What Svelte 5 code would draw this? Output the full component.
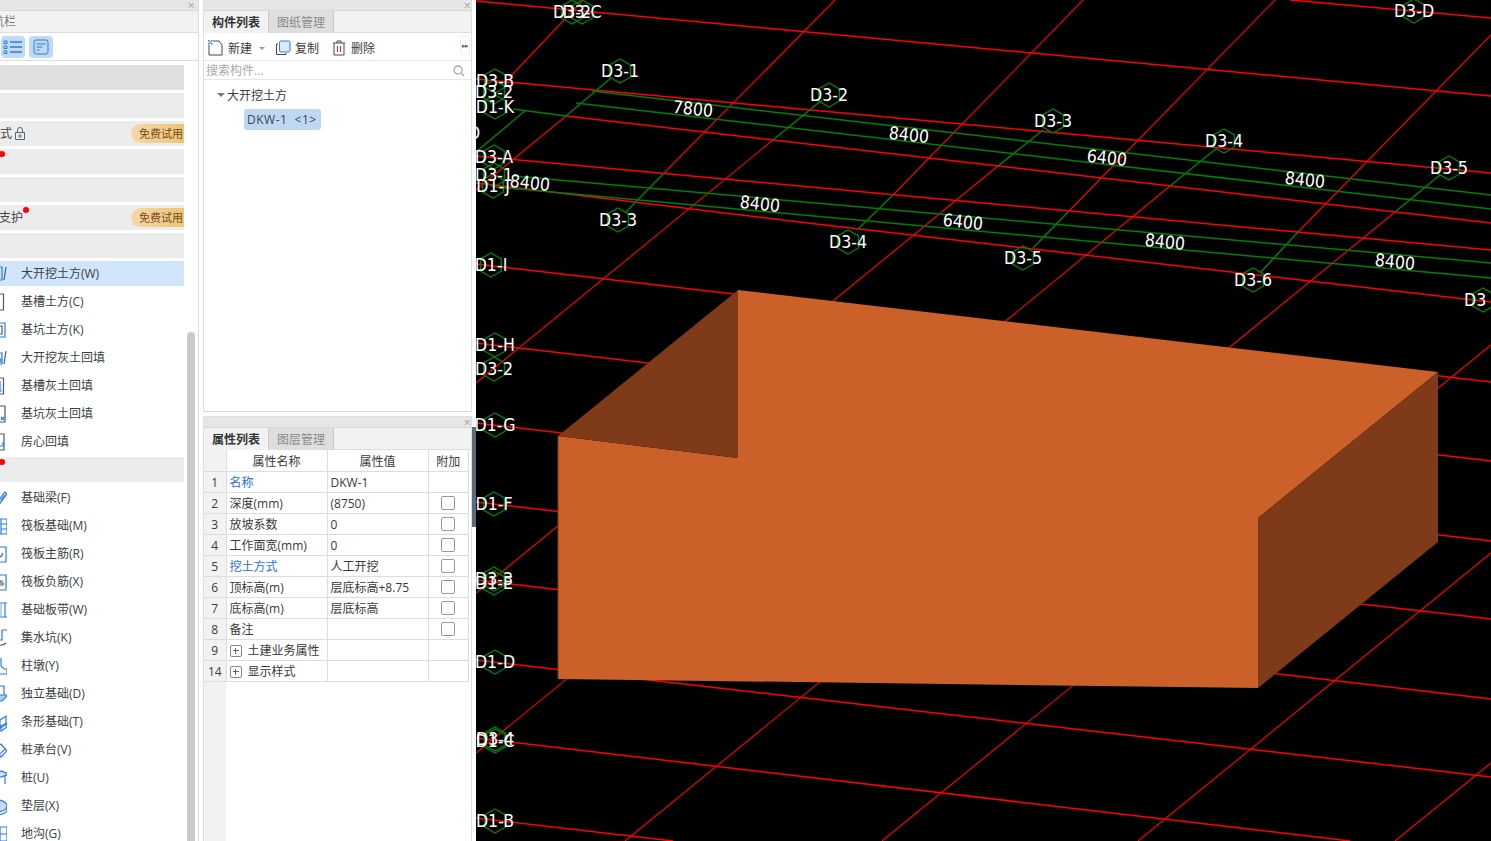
<script>
  const B = "#2c7be5";
  const D = "#4a5a6a";

  // left edge of the navigation is cut off by the window, only the right part of each icon shows
  const icons = {
    wa: [{ d: "M7 3h8v13H7z", s: B }, { d: "M19 3l-2 13", s: D }],
    cao: [{ d: "M8 2h8.500v16H8", s: D }, { d: "M12 4v12", s: B }],
    keng: [{ d: "M8 3h10v14H8z", s: B }, { d: "M8 6h7v8H8", s: D }],
    huia: [{ d: "M7 5h8v11H7z", s: B }, { d: "M19 3l-2 13", s: D }, { d: "M10 11h4v3h-4z", s: B, f: "#bcd7f5" }],
    huib: [{ d: "M8 2h8.500v16H8", s: D }, { d: "M13 5v10h2", s: B }],
    huic: [{ d: "M8 2h10v16H8z", s: D }, { d: "M14 13l3 3M17 13l-3 3", s: B }],
    fang: [{ d: "M8 2h9v16H8", s: D }, { d: "M16 10v4h-4", s: B }],
    liang: [{ d: "M8 17L18 4l2 2L11 18z", s: B, f: "#cfe3f8" }, { d: "M14 12l4-5", s: B }],
    ban: [{ d: "M6 3h14v15H6z", s: B }, { d: "M14 3v15M14 8h6M14 13h6", s: B }],
    zhu: [{ d: "M6 3h13v15H6z", s: B }, { d: "M15 9c1 2-1 4-3 4", s: D }],
    fu: [{ d: "M6 3h13v15H6z", s: B }, { d: "M16 9h-3v2h3v2h-3", s: D }],
    dai: [{ d: "M8 3h12M8 17h12M18 3v14", s: B }, { d: "M14 4v12", s: "#8ab6ee" }],
    shui: [{ d: "M20 2h-5v10h-2", s: B }, { d: "M8 15c3 3 8 3 11 0", s: D }],
    dun: [{ d: "M14 2v8l3 3h3v5H6", s: B }],
    du: [{ d: "M13 2h4v10h-4", s: B }, { d: "M7 14l6-3h8l-6 6H7z", s: B, f: "#a9cdf3" }],
    tiao: [{ d: "M13 8l6-4v9l-6 3z", s: B }, { d: "M8 12l6 2v5H8z", s: B }, { d: "M14 14l6-3v4l-6 4", s: B }],
    tai: [{ d: "M8 9l6-5 6 7-6 6z", s: B }, { d: "M12 15l6-6", s: B }],
    zhuang: [{ d: "M6 7l8-4 8 3-8 3z", s: B, f: "#cfe3f8" }, { d: "M12 9v9M18 8v8", s: B }],
    dian: [{ d: "M8 4c5-1 12 2 12 6s-6 6-12 6", s: B, f: "#c3dbf6" }, { d: "M20 10v4c0 3-6 5-12 5", s: B }],
    gou: [{ d: "M6 3h14v14H6z", s: B }, { d: "M13 3v14M6 10h14", s: B }]
  };

  const rows = [
    { kind: "head" },
    { kind: "group" },
    { kind: "group", label: "土方式", lock: true, trial: true, clip: 2 },
    { kind: "group", dot: true },
    { kind: "group" },
    { kind: "group", label: "基坑支护", trial: true, clip: 1, sup: true },
    { kind: "group" },
    { label: "大开挖土方(W)", icon: "wa", active: true },
    { label: "基槽土方(C)", icon: "cao" },
    { label: "基坑土方(K)", icon: "keng" },
    { label: "大开挖灰土回填", icon: "huia" },
    { label: "基槽灰土回填", icon: "huib" },
    { label: "基坑灰土回填", icon: "huic" },
    { label: "房心回填", icon: "fang" },
    { kind: "group", dot: true },
    { label: "基础梁(F)", icon: "liang" },
    { label: "筏板基础(M)", icon: "ban" },
    { label: "筏板主筋(R)", icon: "zhu" },
    { label: "筏板负筋(X)", icon: "fu" },
    { label: "基础板带(W)", icon: "dai" },
    { label: "集水坑(K)", icon: "shui" },
    { label: "柱墩(Y)", icon: "dun" },
    { label: "独立基础(D)", icon: "du" },
    { label: "条形基础(T)", icon: "tiao" },
    { label: "桩承台(V)", icon: "tai" },
    { label: "桩(U)", icon: "zhuang" },
    { label: "垫层(X)", icon: "dian" },
    { label: "地沟(G)", icon: "gou" }
  ];

  const props = [
    { n: 1, name: "名称", value: "DKW-1", link: true, noCheck: true },
    { n: 2, name: "深度(mm)", value: "(8750)" },
    { n: 3, name: "放坡系数", value: "0" },
    { n: 4, name: "工作面宽(mm)", value: "0" },
    { n: 5, name: "挖土方式", value: "人工开挖", link: true },
    { n: 6, name: "顶标高(m)", value: "层底标高+8.75" },
    { n: 7, name: "底标高(m)", value: "层底标高" },
    { n: 8, name: "备注", value: "" },
    { n: 9, name: "土建业务属性", value: "", group: true },
    { n: 14, name: "显示样式", value: "", group: true }
  ];

  // grid drawing, all coordinates are window pixels
  const redH = [
    [1290, 0, 1491, 18], [476, 1, 1491, 96], [476, 79, 1491, 173], [566, 116, 1491, 223],
    [476, 156, 1491, 250], [476, 183, 816, 224], [816, 224, 1491, 302], [476, 264, 1491, 382],
    [476, 343, 1491, 461], [476, 423, 1491, 541], [476, 502, 1491, 619], [476, 580, 1491, 699],
    [476, 660, 1491, 777], [476, 738, 1350, 841], [476, 818, 673, 841]
  ];
  const redD = [
    [509, 78, 583, 0], [476, 190, 566, 116], [476, 383, 773, 140], [664, 173, 835, 0],
    [476, 593, 833, 301], [833, 301, 998, 166], [476, 753, 1007, 320], [1007, 320, 1170, 186],
    [893, 195, 1083, 0], [1068, 212, 1275, 0], [1298, 232, 1491, 35], [625, 841, 1263, 320],
    [1263, 320, 1395, 212], [882, 841, 1491, 345], [1138, 841, 1491, 553], [1395, 841, 1491, 763]
  ];
  const green = [
    [592, 91, 1491, 195], [576, 103, 1491, 209], [513, 176, 1491, 263], [496, 187, 1491, 278],
    [513, 109, 566, 116], [476, 152, 526, 110], [566, 116, 611, 78], [773, 140, 822, 100],
    [998, 166, 1043, 130], [1170, 186, 1217, 148], [1395, 212, 1440, 175], [626, 212, 664, 173],
    [857, 230, 893, 195], [1033, 248, 1068, 212], [1260, 273, 1298, 232]
  ];
  const axes = [
    ["D3-2", 572, 12], ["D3-C", 582, 12], ["D3-D", 1414, 11], ["D3-1", 620, 71], ["D3-2", 829, 95],
    ["D3-3", 1053, 121], ["D3-4", 1224, 141], ["D3-5", 1449, 168], ["D3-3", 618, 220],
    ["D3-4", 848, 242], ["D3-5", 1023, 258], ["D3-6", 1253, 280], ["", 1483, 300],
    ["D3-B", 495, 81], ["D3-2", 494, 92], ["D1-K", 495, 107], ["D3-A", 494, 157],
    ["D3-1", 494, 175], ["D1-J", 493, 186], ["D1-I", 491, 265], ["D1-H", 495, 345],
    ["D3-2", 494, 369], ["D1-G", 495, 425], ["D1-F", 494, 504], ["D3-3", 494, 579],
    ["D1-E", 494, 583], ["D1-D", 495, 662], ["D3-4", 495, 739], ["D1-C", 495, 741], ["D1-B", 495, 821]
  ];
  const dims = [
    ["7800", 693, 109], ["8400", 909, 135], ["6400", 1107, 158], ["8400", 1305, 180],
    ["8400", 530, 183], ["8400", 760, 204], ["6400", 963, 222], ["8400", 1165, 242], ["8400", 1395, 262]
  ];

  const hex = (x, y, r = 12) =>
    [0, 1, 2, 3, 4, 5]
      .map((i) => {
        const a = (Math.PI / 3) * i + Math.PI / 6;
        return `${(x + r * Math.cos(a)).toFixed(1)},${(y + r * Math.sin(a)).toFixed(1)}`;
      })
      .join(" ");
</script>

<div class="app">
  <aside class="nav">
    <div class="strip"><span class="close">×</span></div>
    <div class="title">导航栏</div>
    <div class="view-tools">
      <button class="view-btn" aria-label="列表">
        <svg width="20" height="16" viewBox="0 0 20 16" fill="none" stroke="#2c7be5">
          <path d="M1 2h3v2.500H1zM1 7h3v2.500H1zM1 12h3v2.500H1z" />
          <path d="M7 3h12M7 8h12M7 13h12" stroke-width="1.300" />
        </svg>
      </button>
      <button class="view-btn" aria-label="详情">
        <svg width="16" height="16" viewBox="0 0 16 16" fill="none" stroke="#2c7be5">
          <rect x="1" y="1" width="14" height="14" rx="2" />
          <path d="M3.500 5h9M3.500 8h6M3.500 11h3" />
        </svg>
      </button>
    </div>
    <div class="rows">
      {#each rows as row}
        {#if row.kind}
          <div class="row" class:head={row.kind === "head"} class:group={row.kind === "group"}>
            {#if row.dot}<i class="dot"></i>{/if}
            {#if row.label}
              <span class="group-label" class:tight={row.sup}>{row.label}</span>
            {/if}
            {#if row.sup}<i class="dot sup"></i>{/if}
            {#if row.lock}
              <svg class="lock" width="12" height="13" viewBox="0 0 12 13" fill="none" stroke="#5a6470">
                <path d="M1.500 5.500h9v7h-9zM3.500 5.500V3a2.500 2.500 0 0 1 5 0v2.500" />
                <circle cx="6" cy="9" r="1.200" />
              </svg>
            {/if}
            {#if row.trial}<span class="trial">免费试用</span>{/if}
          </div>
        {:else}
          <div class="row item" class:active={row.active}>
            <svg class="item-icon" width="20" height="20" viewBox="0 0 20 20" fill="none">
              {#each icons[row.icon] as p}
                <path d={p.d} stroke={p.s} fill={p.f ?? "none"} stroke-width="1.200" />
              {/each}
            </svg>
            <span class="item-label">{row.label}</span>
          </div>
        {/if}
      {/each}
    </div>
    <div class="scroll-thumb"></div>
  </aside>

  <div class="middle">
    <section class="panel list-panel">
      <div class="strip"><span class="close">×</span></div>
      <div class="tabs">
        <span class="tab on">构件列表</span>
        <span class="tab">图纸管理</span>
      </div>
      <div class="tools">
        <span class="tool">
          <svg width="16" height="16" viewBox="0 0 16 16" fill="none" stroke="#3a4a5a">
            <path d="M1 5v10h13V5l-3-4H5" />
            <path d="M0 0h1.500v1.500H0zM3 0h1.500v1.500H3zM1.500 1.500H3V3H1.500zM0 3h1.500v1.500H0zM3 3h1.500v1.500H3z" fill="#2c7be5" stroke="none" />
          </svg>
          新建
        </span>
        <span class="caret"></span>
        <span class="tool copy">
          <svg width="16" height="16" viewBox="0 0 16 16" fill="none">
            <path d="M3 4H1.500v10.500H11V13" stroke="#3a4a5a" />
            <rect x="4.500" y="1" width="10.500" height="11" rx="1.500" stroke="#2c7be5" fill="#dbe9fa" />
          </svg>
          复制
        </span>
        <span class="tool del">
          <svg width="14" height="16" viewBox="0 0 14 16" fill="none" stroke="#3a4a5a">
            <path d="M1 3h12M5 3V1h4v2M2 3v12h10V3" />
            <path d="M5.500 6v6M8.500 6v6" stroke="#e02020" />
          </svg>
          删除
        </span>
        <span class="more">▸▸</span>
      </div>
      <div class="search">
        <span>搜索构件...</span>
        <svg width="12" height="12" viewBox="0 0 12 12" fill="none" stroke="#aaa" stroke-width="1.300">
          <circle cx="5" cy="5" r="4" /><path d="M8 8l3 3" />
        </svg>
      </div>
      <div class="tree">
        <div class="tree-root"><i class="tree-arrow"></i>大开挖土方</div>
        <div class="tree-leaf">DKW-1&nbsp; &lt;1&gt;</div>
      </div>
    </section>

    <section class="panel props-panel">
      <div class="strip"><span class="close">×</span></div>
      <div class="tabs">
        <span class="tab on">属性列表</span>
        <span class="tab">图层管理</span>
      </div>
      <div class="table-wrap">
        <table>
          <thead>
            <tr><th class="num"></th><th>属性名称</th><th>属性值</th><th>附加</th></tr>
          </thead>
          <tbody>
            {#each props as p}
              <tr>
                <td class="num">{p.n}</td>
                <td class:link={p.link}>
                  {#if p.group}<i class="plus"></i><span class="group-name">{p.name}</span>{:else}{p.name}{/if}
                </td>
                <td>{p.value}</td>
                <td class="check">
                  {#if !p.noCheck && !p.group}<i class="box"></i>{/if}
                </td>
              </tr>
            {/each}
          </tbody>
        </table>
      </div>
    </section>
    <div class="splitter"></div>
  </div>

  <main class="canvas">
    <svg width="1015" height="841" viewBox="476 0 1015 841">
      {#each redH as [x1, y1, x2, y2]}
        <line {x1} {y1} {x2} {y2} stroke="#f00" stroke-width="1.500" />
      {/each}
      {#each redD as [x1, y1, x2, y2]}
        <line {x1} {y1} {x2} {y2} stroke="#f00" stroke-width="1.100" />
      {/each}
      {#each green as [x1, y1, x2, y2]}
        <line {x1} {y1} {x2} {y2} stroke="#008000" stroke-width="1.500" />
      {/each}

      <polygon points="738,290 1438,372 1258,518 1258,688 558,679 558,436 738,458" fill="#cb6028" />
      <polygon points="558,436 738,290 738,458" fill="#7f3a1a" />
      <polygon points="1258,518 1438,372 1438,542 1258,688" fill="#7f3a1a" />
      <line x1="558" y1="436" x2="558" y2="679" stroke="#7f3a1a" />

      {#each axes as [, x, y]}
        <polygon points={hex(x, y)} fill="none" stroke="#008000" stroke-width="1.400" />
      {/each}
      {#each axes as [t, x, y]}
        {#if t}<text x={x} y={y + 6} text-anchor="middle" class="axis">{t}</text>{/if}
      {/each}
      <text x="468" y="139" class="axis">D</text>
      <text x="1464" y="306" class="axis">D3</text>
      {#each dims as [t, x, y]}
        <text x={x} y={y + 6} text-anchor="middle" class="axis" transform="rotate(6.500 {x} {y})">{t}</text>
      {/each}
    </svg>
  </main>
</div>

<style>
  :global(body) {
    margin: 0;
    background: #fff;
  }

  .app {
    display: flex;
    width: 1491px;
    height: 841px;
    overflow: hidden;
    font-family: "Open Sans", "Noto Sans CJK SC", sans-serif;
    font-size: 12px;
    line-height: 17px;
    color: #3a3a3a;
  }

  .nav {
    position: relative;
    flex: none;
    box-sizing: border-box;
    width: 239px;
    margin-left: -40px;
    border-right: 1px solid #ddd;
  }

  .strip {
    position: relative;
    height: 10px;
    background: #e6e6e6;
    border-bottom: 1px solid #d8d8d8;
  }

  .close {
    position: absolute;
    right: 0;
    top: -2px;
    font-size: 13px;
    line-height: 14px;
    color: #a8a8a8;
  }

  .nav .close {
    right: 3px;
  }

  .title {
    box-sizing: border-box;
    height: 22px;
    padding: 2px 0 0 20px;
    background: #f2f2f2;
    border-bottom: 1px solid #ddd;
    color: #777;
  }

  .view-tools {
    display: flex;
    align-items: center;
    gap: 4px;
    box-sizing: border-box;
    height: 28px;
    padding: 3px 0 3px 41px;
    border-bottom: 1px solid #ddd;
  }

  .view-btn {
    display: flex;
    align-items: center;
    justify-content: center;
    width: 24px;
    height: 22px;
    padding: 0;
    border: 0;
    border-radius: 4px;
    background: #c0daf4;
  }

  .rows {
    display: flex;
    flex-direction: column;
    gap: 3px;
    padding: 4px 14px 0 0;
  }

  .row {
    position: relative;
    display: flex;
    flex: none;
    align-items: center;
    height: 25px;
  }

  .head {
    background: #e0e0e0;
  }

  .group {
    background: #ececec;
  }

  .group-label {
    margin-left: 16px;
    color: #444;
  }

  .group-label.tight {
    margin-left: 15px;
  }

  .lock {
    margin-left: 2px;
  }

  .trial {
    position: absolute;
    right: 0;
    top: 3px;
    box-sizing: border-box;
    width: 53px;
    height: 19px;
    padding-left: 8px;
    border-radius: 10px 0 0 10px;
    background: linear-gradient(90deg, #f3d8aa, #ecc477);
    color: #7a4a12;
    font-size: 11px;
    line-height: 19px;
    white-space: nowrap;
    overflow: hidden;
  }

  .dot {
    position: absolute;
    left: 39px;
    top: 2px;
    width: 6px;
    height: 6px;
    border-radius: 50%;
    background: #f00;
  }

  .dot.sup {
    left: 63px;
    top: 2px;
  }

  .item {
    color: #3a3f45;
  }

  .item-icon {
    flex: none;
    margin: 0 14px 0 27px;
  }

  .item.active {
    background: #d0e5fb;
  }

  .scroll-thumb {
    position: absolute;
    left: 227px;
    top: 332px;
    bottom: 0;
    width: 8px;
    border-radius: 4px 4px 0 0;
    background: #c9c9c9;
  }

  .middle {
    position: relative;
    flex: none;
    display: flex;
    flex-direction: column;
    gap: 4px;
    box-sizing: border-box;
    width: 277px;
    padding: 0 4px 0 4px;
  }

  .panel {
    display: flex;
    flex-direction: column;
    border: 1px solid #ddd;
    border-top: 0;
  }

  .list-panel {
    height: 412px;
    box-sizing: border-box;
  }

  .props-panel {
    flex: 1;
    border-top: 1px solid #ddd;
    border-bottom: 0;
  }

  .tabs {
    display: flex;
    flex: none;
    height: 21px;
    background: #f2f2f2;
    border-bottom: 1px solid #ddd;
  }

  .tab {
    box-sizing: border-box;
    width: 65px;
    height: 22px;
    padding-top: 3px;
    text-align: center;
    background: #dedede;
    border-right: 1px solid #ccc;
    color: #8a8a8a;
  }

  .tab.on {
    background: #f2f2f2;
    color: #333;
    font-weight: 700;
  }

  .tools {
    position: relative;
    display: flex;
    flex: none;
    align-items: center;
    box-sizing: border-box;
    height: 28px;
    padding: 3px 0 0 4px;
    border-bottom: 1px solid #e6e6e6;
  }

  .tool {
    display: flex;
    align-items: center;
    gap: 4px;
  }

  .caret {
    margin-left: 7px;
    border: 3px solid transparent;
    border-top-color: #999;
    border-bottom: 0;
  }

  .copy {
    margin-left: 10px;
  }

  .del {
    margin-left: 13px;
    gap: 5px;
  }

  .more {
    position: absolute;
    right: 1px;
    top: 3px;
    width: 10px;
    height: 19px;
    border: 1px solid #eee;
    border-radius: 3px;
    box-sizing: border-box;
    font-size: 7px;
    line-height: 17px;
    text-align: center;
    letter-spacing: -1px;
    color: #666;
  }

  .search {
    display: flex;
    flex: none;
    align-items: center;
    justify-content: space-between;
    box-sizing: border-box;
    height: 19px;
    padding: 1px 6px 0 2px;
    border-bottom: 1px solid #e6e6e6;
    color: #aaa;
  }

  .tree {
    padding-top: 7px;
  }

  .tree-root {
    position: relative;
    height: 17px;
    padding-left: 23px;
  }

  .tree-arrow {
    position: absolute;
    left: 13px;
    top: 6px;
    border: 4px solid transparent;
    border-top-color: #777;
    border-bottom: 0;
  }

  .tree-leaf {
    box-sizing: border-box;
    width: 77px;
    height: 21px;
    margin: 5px 0 0 40px;
    padding: 2px 0 0 3px;
    border-radius: 3px;
    background: #bfd8f2;
    color: #3a4652;
    letter-spacing: 0.500px;
    white-space: nowrap;
  }

  .table-wrap {
    flex: 1;
    background: linear-gradient(90deg, #f2f2f2 22px, #fff 22px);
  }

  table {
    width: 265px;
    border-collapse: collapse;
    table-layout: fixed;
    background: #fff;
  }

  th,
  td {
    height: 21px;
    box-sizing: border-box;
    padding: 2px 0 0 3px;
    border: 1px solid #ddd;
    font-weight: 400;
    white-space: nowrap;
    line-height: 16px;
  }

  th {
    padding: 4px 0 0;
    text-align: center;
  }

  th:first-child,
  td:first-child {
    border-left: 0;
  }

  th,
  tr:first-child td {
    border-top: 0;
  }

  th.num,
  td.num {
    width: 22px;
    padding-left: 0;
    background: #f2f2f2;
    text-align: center;
  }

  th:nth-child(2),
  th:nth-child(3) {
    width: 101px;
  }

  .link {
    color: #2a6fe0;
  }

  .check {
    padding: 0;
    text-align: center;
  }

  .box {
    display: block;
    box-sizing: border-box;
    width: 14px;
    height: 14px;
    margin: 0 auto;
    border: 1px solid #999;
    border-radius: 2px;
  }

  .plus {
    position: relative;
    display: inline-block;
    box-sizing: border-box;
    width: 12px;
    height: 12px;
    margin-right: 6px;
    vertical-align: -2px;
    border: 1px solid #888;
    border-radius: 2px;
    background:
      linear-gradient(#666, #666) center / 6px 1px no-repeat,
      linear-gradient(#666, #666) center / 1px 6px no-repeat;
  }

  .splitter {
    position: absolute;
    right: 0;
    top: 427px;
    width: 4px;
    height: 100px;
    background: #5e6b78;
  }

  .canvas {
    flex: none;
    width: 1015px;
    height: 841px;
    background: #000;
  }

  .canvas svg {
    display: block;
  }

  .axis {
    font-family: "DejaVu Sans Condensed", "DejaVu Sans", sans-serif;
    font-size: 17.600px;
    fill: #fff;
  }
</style>
